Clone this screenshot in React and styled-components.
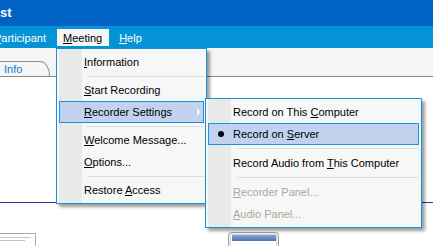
import styled, { createGlobalStyle } from "styled-components";

const GlobalStyle = createGlobalStyle`
  html, body {
    margin: 0;
    padding: 0;
    overflow: hidden;
    background: #fff;
  }
`;

const Frame = styled.div`
  width: 433px;
  height: 246px;
  overflow: hidden;
  display: flex;
  flex-direction: column;
  background: #fff;
  font-family: "Liberation Sans", Arial, sans-serif;
  font-size: 11px;
  color: #000;
`;

const TitleBar = styled.div`
  height: 26px;
  flex: none;
  display: flex;
  align-items: center;
  background: #0062c4;
  color: #fff;
  font-weight: bold;
  font-size: 13px;
  padding-bottom: 2px;
  box-sizing: border-box;
`;

const MenuBar = styled.div`
  height: 22px;
  flex: none;
  display: flex;
  align-items: flex-start;
  background: #0593d7;
  position: relative;
  z-index: 5;
`;

const BarItem = styled.div`
  position: relative;
  margin-top: 3px;
  height: 17px;
  padding: 0 7px 0 6px;
  margin-right: 4px;
  display: flex;
  align-items: center;
  white-space: nowrap;
  color: ${(p) => (p.$open ? "#000" : "#fff")};
  background: ${(p) => (p.$open ? "#f6f6f6" : "transparent")};

  &:first-child {
    margin-left: -10px;
    padding-left: 4px;
  }
`;

const Toolbar = styled.div`
  height: 29px;
  flex: none;
  box-sizing: border-box;
  display: flex;
  align-items: flex-end;
  background: #f5f5f5;
  border-bottom: 1px solid #8a8a8a;
`;

const Tab = styled.div`
  width: 51px;
  height: 15px;
  margin-left: -1px;
  box-sizing: border-box;
  padding-left: 5px;
  display: flex;
  align-items: center;
  border: 1px solid #8d8d8d;
  border-left: none;
  border-bottom: none;
  border-top-right-radius: 10px 15px;
  color: #0a80d2;
  font-size: 11px;
`;

const Content = styled.div`
  flex: 1;
  display: flex;
  flex-direction: column;
  background: #fff;
`;

const Stage = styled.div`
  height: 125px;
  flex: none;
  border-bottom: 1px solid #30309c;
`;

const ThumbRow = styled.div`
  display: flex;
  align-items: flex-start;
  margin-top: 29px;
`;

const Thumb = styled.svg`
  display: block;
  flex: none;
  margin-top: ${(p) => p.$top || 0}px;
  margin-left: ${(p) => p.$left || 0}px;
`;

const Menu = styled.div`
  position: absolute;
  top: ${(p) => p.$top}px;
  left: ${(p) => p.$left}px;
  width: ${(p) => p.$width}px;
  box-sizing: border-box;
  border: 1px solid #1693d8;
  padding: 2px;
  background: linear-gradient(
    to right,
    #f7f7f7 2px,
    #e9e9e9 2px,
    #e9e9e9 25px,
    #f7f7f7 25px
  );
  box-shadow: 3px 3px 3px rgba(0, 0, 0, 0.38);
  color: #000;
  z-index: ${(p) => p.$z || 10};
`;

const Item = styled.div`
  position: relative;
  height: 22px;
  box-sizing: border-box;
  display: flex;
  align-items: center;
  white-space: nowrap;
  border: 1px solid ${(p) => (p.$hot ? "#1b93d9" : "transparent")};
  background: ${(p) => (p.$hot ? "#c1d2ee" : "transparent")};
  color: ${(p) => (p.$disabled ? "#aca899" : "#000")};
`;

const IconSlot = styled.span`
  width: 24px;
  flex: none;
  display: flex;
  align-items: center;
  justify-content: center;
`;

const Bullet = styled.span`
  width: 6px;
  height: 6px;
  border-radius: 50%;
  background: #000;
`;

const Arrow = styled.span`
  margin-left: auto;
  margin-right: 2px;
  width: 0;
  height: 0;
  border-top: 4px solid transparent;
  border-bottom: 4px solid transparent;
  border-left: 4px solid #f2f2f2;
`;

const Separator = styled.div`
  height: ${(p) => p.$h || 6}px;
  display: flex;
  align-items: center;
  padding-left: ${(p) => p.$indent}px;

  &::after {
    content: "";
    flex: 1;
    height: 1px;
    background: #dedede;
  }
`;

function Label({ text }) {
  const i = text.indexOf("&");
  if (i < 0) return <span>{text}</span>;
  return (
    <span>
      {text.slice(0, i)}
      <u>{text[i + 1]}</u>
      {text.slice(i + 2)}
    </span>
  );
}

const recorderOptions = [
  { text: "Record on This &Computer" },
  { text: "Record on &Server", checked: true, hot: true },
  { sep: true },
  { text: "Record Audio from &This Computer" },
  { sep: true },
  { text: "&Recorder Panel...", disabled: true },
  { text: "&Audio Panel...", disabled: true },
];

function RecorderMenu() {
  return (
    <Menu $top={-4} $left={145} $width={217} $z={20}>
      {recorderOptions.map((o, i) =>
        o.sep ? (
          <Separator key={i} $indent={29} $h={7} />
        ) : (
          <Item key={i} $hot={o.hot} $disabled={o.disabled}>
            <IconSlot>{o.checked && <Bullet />}</IconSlot>
            <Label text={o.text} />
          </Item>
        )
      )}
    </Menu>
  );
}

function MeetingMenu() {
  return (
    <Menu $top={19} $left={-1} $width={151}>
      <Item>
        <IconSlot />
        <Label text="&Information" />
      </Item>
      <Separator $indent={28} />
      <Item>
        <IconSlot />
        <Label text="&Start Recording" />
      </Item>
      <Item $hot>
        <IconSlot />
        <Label text="&Recorder Settings" />
        <Arrow />
        <RecorderMenu />
      </Item>
      <Separator $indent={28} />
      <Item>
        <IconSlot />
        <Label text="&Welcome Message..." />
      </Item>
      <Item>
        <IconSlot />
        <Label text="&Options..." />
      </Item>
      <Separator $indent={28} />
      <Item>
        <IconSlot />
        <Label text="Restore &Access" />
      </Item>
    </Menu>
  );
}

export default function App() {
  return (
    <>
      <GlobalStyle />
      <Frame>
        <TitleBar>st</TitleBar>
        <MenuBar>
          <BarItem>
            <Label text="&Participant" />
          </BarItem>
          <BarItem $open>
            <Label text="&Meeting" />
            <MeetingMenu />
          </BarItem>
          <BarItem>
            <Label text="&Help" />
          </BarItem>
        </MenuBar>
        <Toolbar>
          <Tab>Info</Tab>
        </Toolbar>
        <Content>
          <Stage />
          <ThumbRow>
            <Thumb width="37" height="14" $top={1}>
              <path d="M0 0.5 H35.5 V14" fill="none" stroke="#a9a9a9" />
              <path d="M0 4.5 H31" stroke="#c4c4c4" />
              <path d="M0 7.5 H25" stroke="#c4c4c4" />
            </Thumb>
            <Thumb width="52" height="15" $left={191}>
              <rect x="0.5" y="0.5" width="50" height="16" rx="3" fill="#f3f3f3" stroke="#9c9c9c" />
              <rect x="2.5" y="2.5" width="46" height="12" rx="1" fill="#fff" stroke="#d6d6d6" />
              <defs>
                <linearGradient id="bar" x1="0" y1="0" x2="0" y2="1">
                  <stop offset="0" stopColor="#8aa6d6" />
                  <stop offset="1" stopColor="#4c6fb4" />
                </linearGradient>
              </defs>
              <rect x="4" y="3" width="44" height="6" fill="url(#bar)" />
            </Thumb>
          </ThumbRow>
        </Content>
      </Frame>
    </>
  );
}
